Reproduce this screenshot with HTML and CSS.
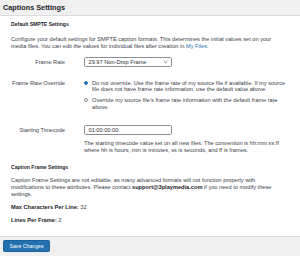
FILE: index.html
```html
<!DOCTYPE html>
<html lang="en">
  <head>
    <meta charset="UTF-8" />
    <title>Captions Settings</title>
    <link rel="stylesheet" href="styles.css">
  </head>
  <body>
    <div class="page">
      <header class="titlebar">
        <h1>Captions Settings</h1>
      </header>

      <main class="content">
        <!-- Default SMPTE Settings -->
        <h2>Default SMPTE Settings</h2>
        <p class="intro">
          Configure your default settings for SMPTE caption formats. This determines the initial values set on your media files. You can edit the values for individual files after creation in <a href="#">My Files</a>.
        </p>

        <div class="form-row row-rate">
          <label class="left">Frame Rate</label>
          <div class="select">
            <span>29.97 Non-Drop Frame</span>
            <svg class="chevron" width="5" height="4" viewBox="0 0 5 4"><path d="M0.8 1.2 L2.5 2.8 L4.2 1.2" fill="none" stroke="#50575e" stroke-width="0.8"/></svg>
          </div>
        </div>

        <div class="form-row row-override">
          <label class="left">Frame Rate Override</label>
          <div class="radios">
            <div class="radio-item">
              <span class="radio checked"></span>
              <span>Do not override. Use the frame rate of my source file if available. If my source file does not have frame rate information, use the default value above.</span>
            </div>
            <div class="radio-item">
              <span class="radio"></span>
              <span>Override my source file's frame rate information with the default frame rate above.</span>
            </div>
          </div>
        </div>

        <div class="form-row row-timecode">
          <label class="left">Starting Timecode</label>
          <div class="input">01:00:00:00</div>
        </div>
        <p class="help">The starting timecode value set on all new files. The convention is hh:mm:ss:ff where hh is hours, mm is minutes, ss is seconds, and ff is frames.</p>

        <!-- Caption Frame Settings -->
        <h2 class="second">Caption Frame Settings</h2>
        <p class="caption-note">
          Caption Frame Settings are not editable, as many advanced formats will not function properly with modifications to these attributes. Please contact <strong>support@3playmedia.com</strong> if you need to modify these settings.
        </p>
        <p class="stat stat-first"><strong>Max Characters Per Line:</strong> 32</p>
        <p class="stat"><strong>Lines Per Frame:</strong> 2</p>
      </main>

      <footer class="actions">
        <button type="button" class="save">Save Changes</button>
      </footer>
    </div>
  </body>
</html>
```

FILE: styles.css
```css
body {
  margin: 0;
  padding: 0;
  font-family: 'Liberation Sans', Arial, sans-serif;
  font-size: 5.65px;
  color: #3c434a;
  background-color: #fff;
}

.page {
  display: flex;
  flex-direction: column;
  height: 256px;
  overflow: hidden;
}

.titlebar {
  height: 15px;
  background-color: #f0f0f1;
  border-bottom: 1px solid #dcdcde;
  flex-shrink: 0;
}

.titlebar h1 {
  margin: 0;
  padding-left: 3px;
  font-size: 7.3px;
  line-height: 15px;
  font-weight: bold;
  color: #1d2327;
}

.content {
  flex: 1;
  padding: 5px 12.5px 0 11px;
}

h2 {
  margin: 0;
  font-size: 5.1px;
  line-height: 7px;
  font-weight: bold;
  color: #1d2327;
}

p {
  margin: 0;
  line-height: 6.6px;
}

a {
  color: #2271b1;
  text-decoration: none;
}

strong {
  color: #1d2327;
}

.intro {
  margin-top: 8px;
}

.form-row {
  display: grid;
  grid-template-columns: 54px 1fr;
  column-gap: 19px;
  align-items: center;
}

label.left {
  text-align: right;
  line-height: 6.6px;
}

.row-rate {
  margin-top: 8px;
}

.select,
.input {
  box-sizing: border-box;
  width: 88px;
  height: 10px;
  border: 0.6px solid #8c8f94;
  border-radius: 1.5px;
  padding: 0 3px 0 3.5px;
  display: flex;
  align-items: center;
  justify-content: space-between;
  color: #2c3338;
}

.row-override {
  margin-top: 12.7px;
  align-items: start;
}

.radios {
  display: flex;
  flex-direction: column;
  gap: 4px;
}

.radio-item {
  display: flex;
  align-items: flex-start;
  gap: 4px;
  line-height: 6.6px;
}

.radio {
  box-sizing: border-box;
  flex-shrink: 0;
  width: 4px;
  height: 4px;
  margin-top: 1.3px;
  border-radius: 50%;
  border: 0.6px solid #8c8f94;
  background-color: #fff;
}

.radio.checked {
  border-color: #2271b1;
  background: radial-gradient(circle, #2271b1 0, #2271b1 50%, #fff 60%);
}

.row-timecode {
  margin-top: 15px;
}

.help {
  margin: 4.7px 0 0 73px;
}

h2.second {
  margin-top: 10.5px;
}

.caption-note {
  margin-top: 6.2px;
  line-height: 7.3px;
}

.stat {
  margin-top: 5.7px;
}

.stat.stat-first {
  margin-top: 5.6px;
}

.actions {
  flex-shrink: 0;
  height: 20px;
  box-sizing: border-box;
  padding: 3px 0 0 3px;
  background-color: #f0f0f1;
  border-top: 1px solid #dcdcde;
}

.save {
  width: 47px;
  height: 12px;
  padding: 0;
  font-family: 'Liberation Sans', Arial, sans-serif;
  font-size: 5.2px;
  color: #fff;
  background-color: #2271b1;
  border: 0.6px solid #1d5f96;
  border-radius: 1.5px;
  cursor: pointer;
}
```
